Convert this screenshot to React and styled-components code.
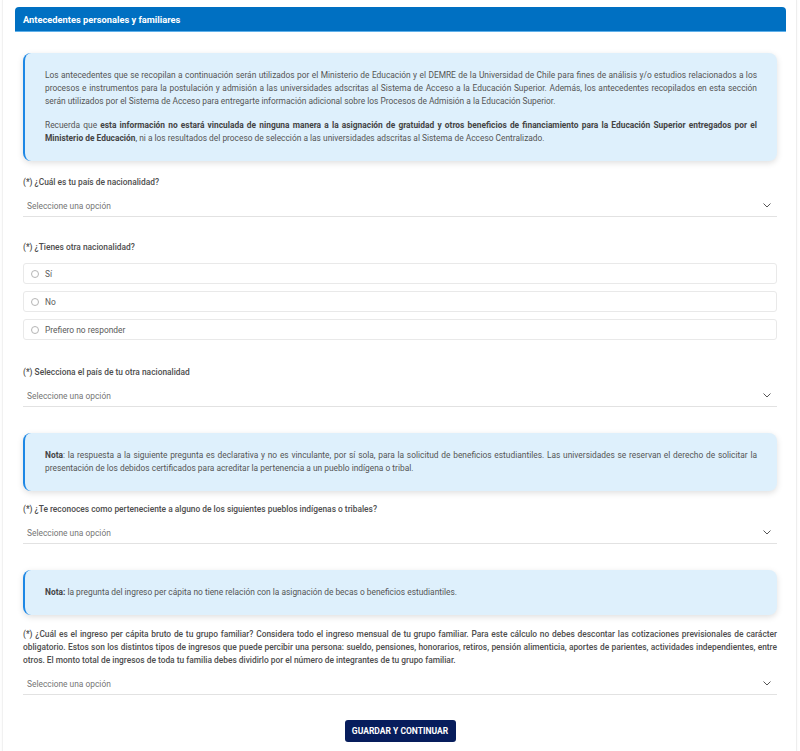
import React from 'react'
import styled, { createGlobalStyle } from 'styled-components'

const GlobalStyle = createGlobalStyle`
  * { box-sizing: border-box; }
  body {
    margin: 0;
    background: #ffffff;
    font-family: Roboto, "Liberation Sans", Arial, sans-serif;
    color: #555555;
  }
`

const Card = styled.div`
  margin: 0 3px 0 2px;
  padding: 7px 10px 0 12px;
  border-left: 1px solid #f1f1f1;
  border-right: 1px solid #eeeeee;
  box-shadow: 0 0 3px rgba(0, 0, 0, 0.04);
  min-height: 751px;
`

const Header = styled.div`
  height: 25px;
  display: flex;
  align-items: center;
  padding-left: 8px;
  background: #0070c2;
  border-radius: 4px 4px 0 0;
  border-bottom: 1px solid #5fb0ea;
  color: #ffffff;
  font-size: 9.3px;
  font-weight: 700;
`

const Body = styled.div`
  display: flex;
  flex-direction: column;
  padding: 21px 9px 20px 8px;
`

const InfoBox = styled.div`
  background: #def0fc;
  border-left: 2px solid #1e88e5;
  border-radius: 8px;
  box-shadow: 0 2px 6px rgba(0, 0, 0, 0.13);
  padding: 16px 20px;
  margin-bottom: ${p => p.$gap || 13}px;
  font-size: 8.4px;
  line-height: 13px;
  color: #555555;
  text-align: justify;

  p { margin: 0 0 11px; }
  p:last-child { margin-bottom: 0; }
  b { color: #444444; font-weight: 700; }
`

const Field = styled.div`
  display: flex;
  flex-direction: column;
  margin-bottom: ${p => p.$gap || 24}px;
`

const Label = styled.div`
  font-size: 8.4px;
  line-height: 13px;
  font-weight: 500;
  color: #4d4d4d;
  margin-bottom: 6px;
  text-align: justify;
`

const Select = styled.div`
  height: 22px;
  display: flex;
  align-items: center;
  justify-content: space-between;
  padding: 0 6px 0 4px;
  border-bottom: 1px solid #e2e2e2;
  font-size: 8.4px;
  color: #757575;
`

const RadioGroup = styled.div`
  display: flex;
  flex-direction: column;
  gap: 7px;
  margin-top: 3px;
`

const RadioRow = styled.label`
  height: 21px;
  display: flex;
  align-items: center;
  gap: 6px;
  padding-left: 7px;
  border: 1px solid #e9e9e9;
  border-radius: 3px;
  font-size: 8.4px;
  color: #5a5a5a;
`

const RadioCircle = styled.span`
  width: 8px;
  height: 8px;
  border-radius: 50%;
  border: 1px solid #b5b5b5;
  background: #ffffff;
`

const Actions = styled.div`
  display: flex;
  justify-content: center;
`

const Button = styled.button`
  width: 111px;
  height: 22px;
  border: none;
  border-radius: 3px;
  background: #071d5c;
  color: #ffffff;
  font-family: inherit;
  font-size: 8.5px;
  font-weight: 700;
  text-transform: uppercase;
`

const Chevron = () => (
  <svg width="8" height="5" viewBox="0 0 8 5" fill="none">
    <polyline points="0.8,0.8 4,4 7.2,0.8" stroke="#555" strokeWidth="1" strokeLinecap="round" strokeLinejoin="round" />
  </svg>
)

const Dropdown = () => (
  <Select>
    <span>Seleccione una opción</span>
    <Chevron />
  </Select>
)

const options = ['Sí', 'No', 'Prefiero no responder']

export default function App() {
  return (
    <>
      <GlobalStyle />
      <Card>
        <Header>Antecedentes personales y familiares</Header>
        <Body>
          <InfoBox $gap={15}>
            <p>
              Los antecedentes que se recopilan a continuación serán utilizados por el Ministerio de Educación y el DEMRE de la Universidad de Chile para fines de análisis y/o estudios relacionados a los procesos e instrumentos para la postulación y admisión a las universidades adscritas al Sistema de Acceso a la Educación Superior. Además, los antecedentes recopilados en esta sección serán utilizados por el Sistema de Acceso para entregarte información adicional sobre los Procesos de Admisión a la Educación Superior.
            </p>
            <p>
              Recuerda que <b>esta información no estará vinculada de ninguna manera a la asignación de gratuidad y otros beneficios de financiamiento para la Educación Superior entregados por el Ministerio de Educación</b>, ni a los resultados del proceso de selección a las universidades adscritas al Sistema de Acceso Centralizado.
            </p>
          </InfoBox>

          <Field>
            <Label>(*) ¿Cuál es tu país de nacionalidad?</Label>
            <Dropdown />
          </Field>

          <Field $gap={26}>
            <Label>(*) ¿Tienes otra nacionalidad?</Label>
            <RadioGroup>
              {options.map(o => (
                <RadioRow key={o}>
                  <RadioCircle />
                  {o}
                </RadioRow>
              ))}
            </RadioGroup>
          </Field>

          <Field $gap={26}>
            <Label>(*) Selecciona el país de tu otra nacionalidad</Label>
            <Dropdown />
          </Field>

          <InfoBox $gap={12}>
            <p>
              <b>Nota</b>: la respuesta a la siguiente pregunta es declarativa y no es vinculante, por sí sola, para la solicitud de beneficios estudiantiles. Las universidades se reservan el derecho de solicitar la presentación de los debidos certificados para acreditar la pertenencia a un pueblo indígena o tribal.
            </p>
          </InfoBox>

          <Field $gap={26}>
            <Label>(*) ¿Te reconoces como perteneciente a alguno de los siguientes pueblos indígenas o tribales?</Label>
            <Dropdown />
          </Field>

          <InfoBox $gap={13}>
            <p>
              <b>Nota:</b> la pregunta del ingreso per cápita no tiene relación con la asignación de becas o beneficios estudiantiles.
            </p>
          </InfoBox>

          <Field $gap={25}>
            <Label>
              (*) ¿Cuál es el ingreso per cápita bruto de tu grupo familiar? Considera todo el ingreso mensual de tu grupo familiar. Para este cálculo no debes descontar las cotizaciones previsionales de carácter obligatorio. Estos son los distintos tipos de ingresos que puede percibir una persona: sueldo, pensiones, honorarios, retiros, pensión alimenticia, aportes de parientes, actividades independientes, entre otros. El monto total de ingresos de toda tu familia debes dividirlo por el número de integrantes de tu grupo familiar.
            </Label>
            <Dropdown />
          </Field>

          <Actions>
            <Button>Guardar y continuar</Button>
          </Actions>
        </Body>
      </Card>
    </>
  )
}
